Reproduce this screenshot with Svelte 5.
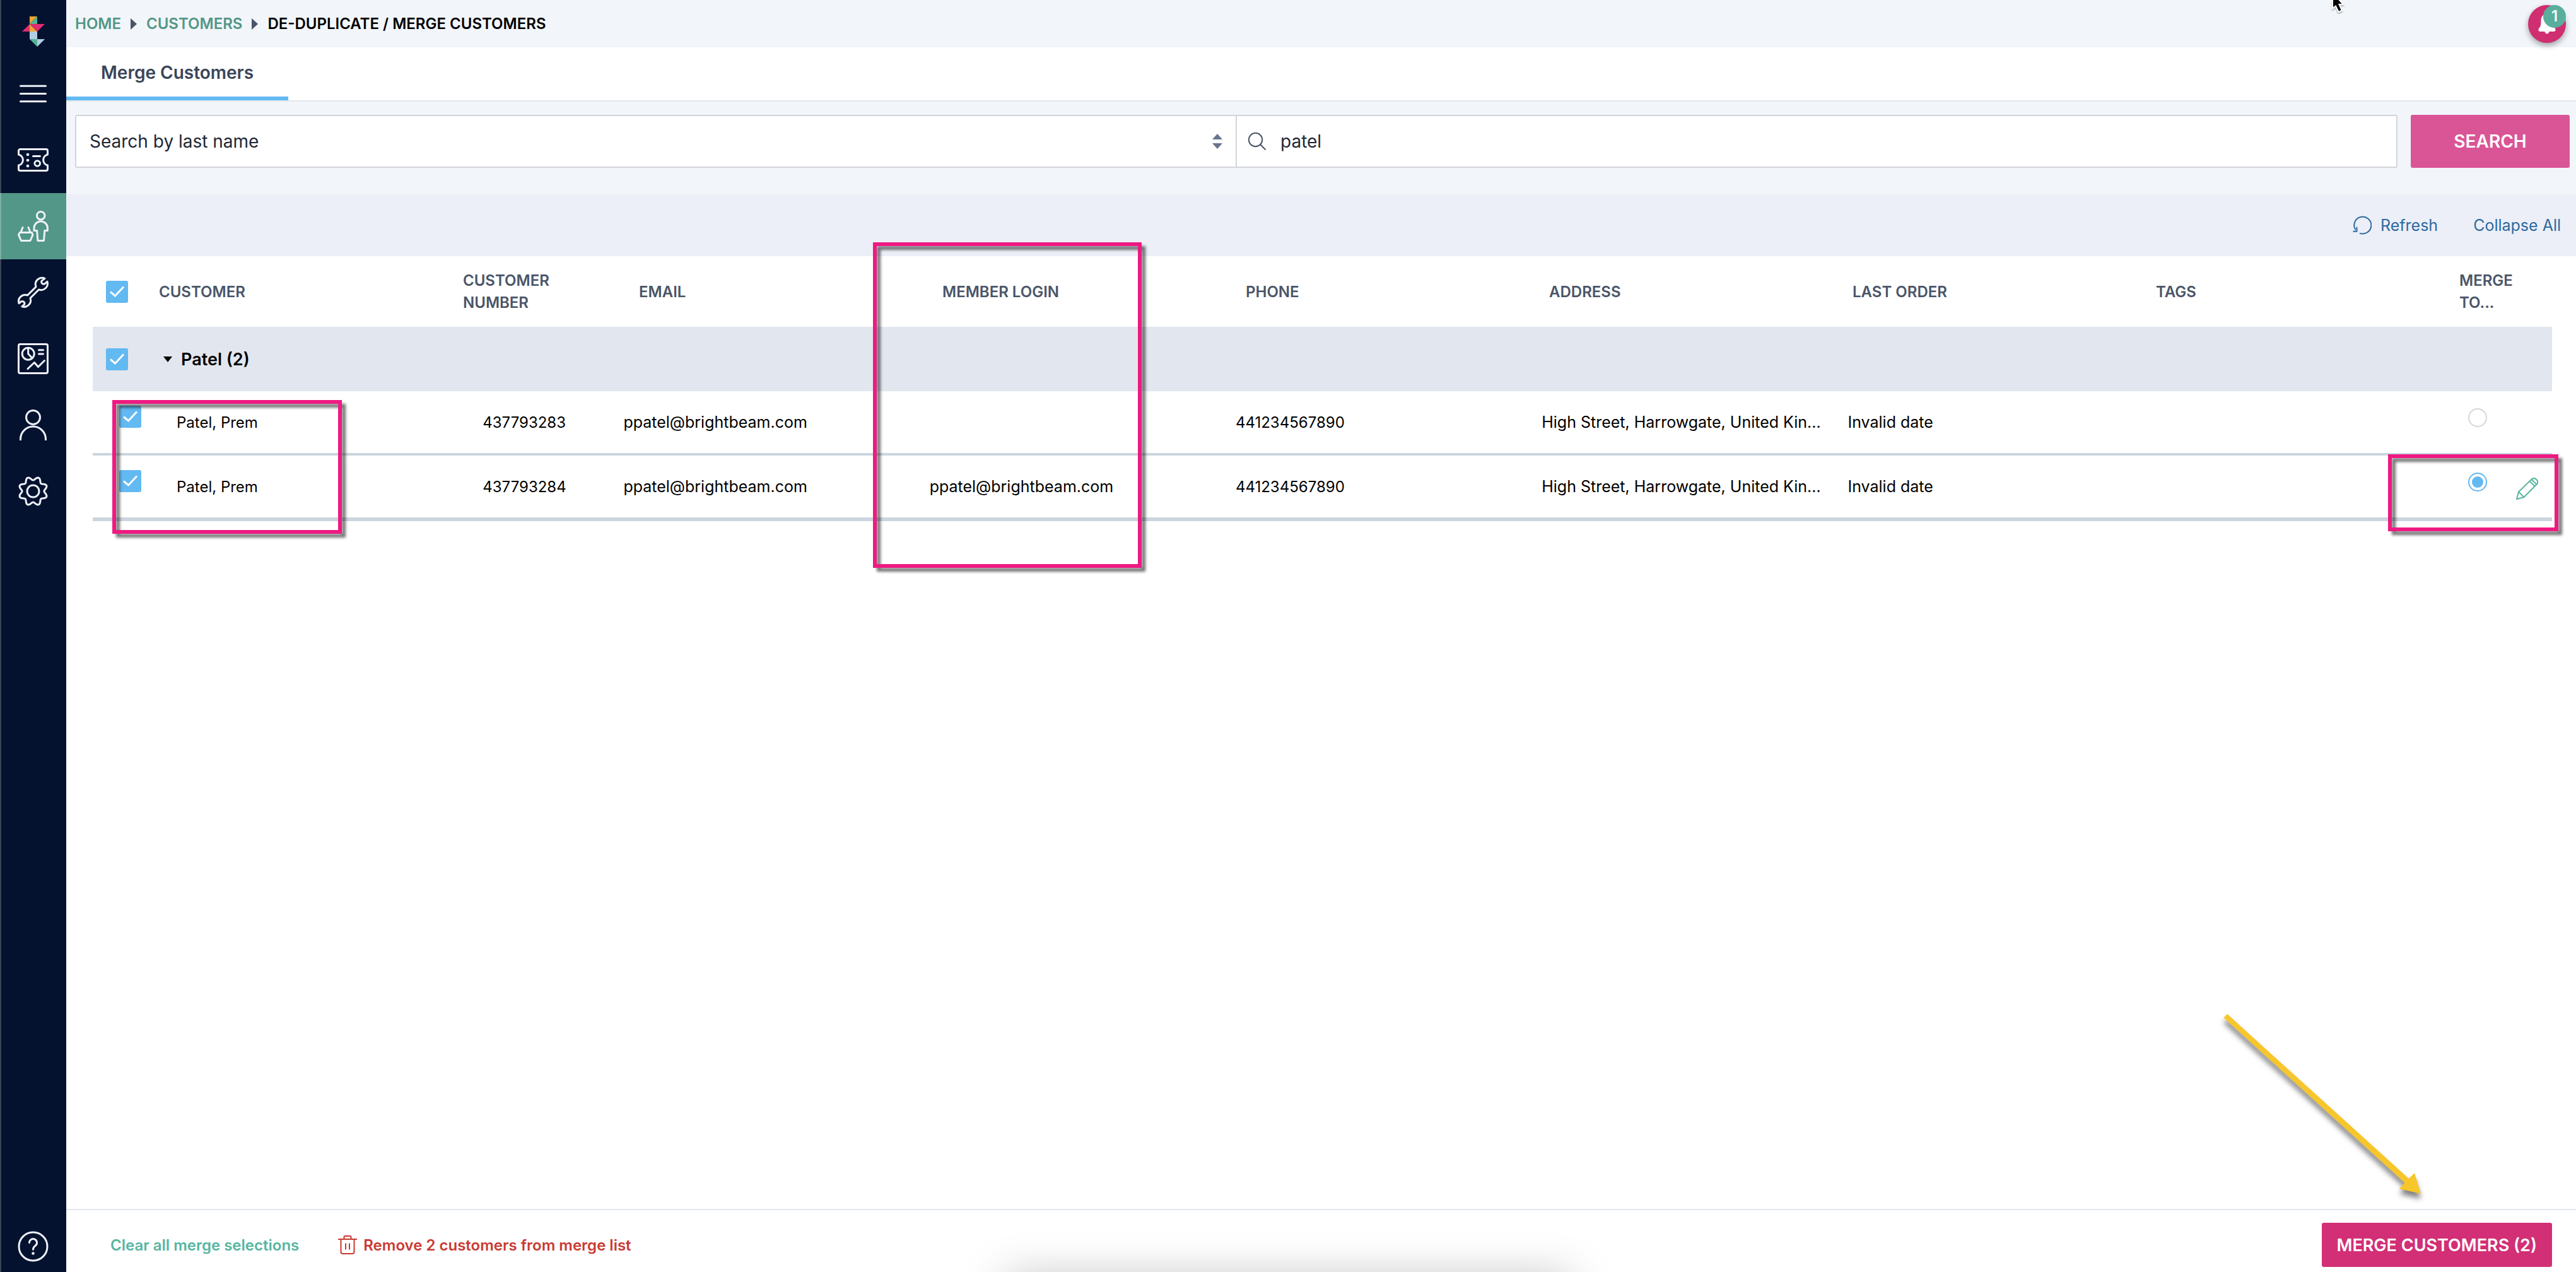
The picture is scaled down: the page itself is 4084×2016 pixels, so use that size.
<script lang="ts">
	type Customer = {
		id: string;
		name: string;
		email: string;
		login: string;
		phone: string;
		address: string;
		lastOrder: string;
		tags: string;
	};

	const headings = ['Email', 'Member login', 'Phone', 'Address', 'Last order', 'Tags'];

	const customers: Customer[] = [
		{
			id: '437793283',
			name: 'Patel, Prem',
			email: 'ppatel@brightbeam.com',
			login: '',
			phone: '441234567890',
			address: 'High Street, Harrowgate, United Kin...',
			lastOrder: 'Invalid date',
			tags: ''
		},
		{
			id: '437793284',
			name: 'Patel, Prem',
			email: 'ppatel@brightbeam.com',
			login: 'ppatel@brightbeam.com',
			phone: '441234567890',
			address: 'High Street, Harrowgate, United Kin...',
			lastOrder: 'Invalid date',
			tags: ''
		}
	];

	let searchBy = $state('last');
	let query = $state('patel');
	let selected = $state(customers.map((c) => c.id));
	let mergeTo = $state('437793284');
	let expanded = $state(true);

	let allSelected = $derived(selected.length === customers.length);

	function toggleAll() {
		selected = allSelected ? [] : customers.map((c) => c.id);
	}

	// Eight-lobed cog outline around the centre of a 49 unit box.
	function cogPath(): string {
		const points: string[] = [];
		for (let deg = 0; deg < 360; deg += 3) {
			const a = (deg * Math.PI) / 180;
			const r = 20.2 - 2.8 * Math.cos(8 * a);
			points.push(`${(24.5 + r * Math.sin(a)).toFixed(2)} ${(24.5 - r * Math.cos(a)).toFixed(2)}`);
		}
		return `M${points.join('L')}Z`;
	}
</script>

{#snippet crumbArrow()}
	<svg class="crumb-arrow" viewBox="0 0 10 18" aria-hidden="true"><path d="M0 0l10 9-10 9z" /></svg>
{/snippet}

<div class="app">
	<nav class="sidebar" aria-label="Main">
		<a class="logo" href="#home" aria-label="Home">
			<svg viewBox="0 0 36 48">
				<path fill="#f0a531" d="M12 0h12L12 12zM12 12l12 12H12z" />
				<path fill="#52b495" d="M24 0v12H12zM12 36h12v12z" />
				<path fill="#df2c72" d="M12 12v12H0zM12 12h24L24 24z" />
				<path fill="#b0cde4" d="M12 24h12v12H12zM24 36h12L24 48z" />
			</svg>
		</a>
		<button class="nav-item" aria-label="Menu">
			<svg viewBox="0 0 49 49"><path d="M4.5 12.3h40M4.5 24.5h40M4.5 36.7h40" /></svg>
		</button>
		<a class="nav-item" href="#tickets" aria-label="Tickets">
			<svg viewBox="0 0 49 49">
				<path
					d="M1.5 10a2.5 2.5 0 0 1 2.5-2.5h41a2.5 2.5 0 0 1 2.5 2.5v6a8.7 8.7 0 0 0 0 17v6a2.5 2.5 0 0 1-2.5 2.5h-41a2.5 2.5 0 0 1-2.5-2.5v-6a8.7 8.7 0 0 0 0-17z"
				/>
				<path d="M24.5 18.5h11" />
				<circle cx="31.2" cy="30" r="4.3" />
				<g class="dots">
					<circle cx="16" cy="16" r="2.3" /><circle cx="16" cy="25" r="2.3" /><circle cx="16" cy="34" r="2.3" />
				</g>
			</svg>
		</a>
		<a class="nav-item active" href="#customers" aria-label="Customers" aria-current="page">
			<svg viewBox="0 0 49 49">
				<circle cx="36.7" cy="7.7" r="6.3" />
				<path d="M26 31.5v-4a10.7 10.7 0 0 1 21.4 0v4h-4.6l-1.3 16h-9.6l-1.3-16z" />
				<path d="M3.5 34.6h19l1.5 3.6-4 9.3h-14.5l-4-9.3zM5 34l3-7.5M20 34l-3-7.5" />
			</svg>
		</a>
		<a class="nav-item" href="#tools" aria-label="Tools">
			<svg viewBox="0 0 49 49">
				<path
					d="M43 2.3A10.4 10.4 0 0 0 29 15.6L15.6 29A10.4 10.4 0 0 0 2 41.8l3.8-3a3.6 3.6 0 0 1 4.7 4.9L6.8 46.8A10.4 10.4 0 0 0 20 33.5L33.5 20A10.4 10.4 0 0 0 47 7.2l-4.2 3.6a3.5 3.5 0 0 1-4.7-4.7z"
				/>
			</svg>
		</a>
		<a class="nav-item" href="#reports" aria-label="Reports">
			<svg viewBox="0 0 49 49">
				<rect x="1.5" y="1.5" width="46" height="46" rx="2.5" />
				<circle cx="16.7" cy="16.7" r="9.5" />
				<path d="M16.7 7.5v9.2l6.3 6.8M33.5 10.8h7M33.5 17h7M16 40.5l10.5-10 6 7 10-10" />
			</svg>
		</a>
		<a class="nav-item" href="#account" aria-label="Account">
			<svg viewBox="0 0 49 49">
				<circle cx="24.5" cy="12.5" r="11" />
				<path class="butt" d="M4.5 49v-2a20 20 0 0 1 40 0v2" />
			</svg>
		</a>
		<a class="nav-item" href="#settings" aria-label="Settings">
			<svg viewBox="0 0 49 49">
				<circle cx="24.5" cy="24.5" r="9.5" />
				<path d={cogPath()} />
			</svg>
		</a>
		<button class="nav-item help" aria-label="Help">
			<svg viewBox="0 0 49 49">
				<circle cx="24.5" cy="24.5" r="22.5" />
				<path d="M18.5 18.5a6 6 0 1 1 9.8 4.7c-2.3 1.9-3.8 2.8-3.8 6" />
				<g class="dots"><circle cx="24.5" cy="35.5" r="2.3" /></g>
			</svg>
		</button>
	</nav>

	<main class="page">
		<header class="topbar">
			<nav class="crumbs" aria-label="Breadcrumb">
				<a href="#home">HOME</a>
				{@render crumbArrow()}
				<a href="#customers">CUSTOMERS</a>
				{@render crumbArrow()}
				<span aria-current="page">DE-DUPLICATE / MERGE CUSTOMERS</span>
			</nav>
			<button class="bell" aria-label="Notifications, 1 unread">
				<svg viewBox="0 0 28 34" aria-hidden="true">
					<path
						d="M14 0c5.5 1 9.5 5 9.5 11.5 0 7 .5 9.5 3 12 1.8 2 1.5 5.5-1.5 5.5h-7.5a3.6 4.5 0 0 1-7 0H3c-3 0-3.3-3.5-1.5-5.5 2.5-2.5 3-5 3-12C4.5 5 8.5 1 14 0z"
					/>
				</svg>
				<span class="badge">1</span>
			</button>
		</header>

		<div class="tabs">
			<a class="tab" href="#merge" aria-current="page">Merge Customers</a>
		</div>

		<form class="search" onsubmit={(e) => e.preventDefault()}>
			<div class="fields">
				<div class="field">
					<select bind:value={searchBy} aria-label="Search by">
						<option value="last">Search by last name</option>
						<option value="email">Search by email</option>
					</select>
					<svg class="sort" viewBox="0 0 16 24" aria-hidden="true">
						<path d="M8 0l8 9H0zM0 15h16l-8 9z" />
					</svg>
				</div>
				<div class="field query">
					<svg class="lens" viewBox="0 0 28 28" aria-hidden="true">
						<circle cx="11.5" cy="11.5" r="10.7" /><path d="M19 19l8.5 8.5" />
					</svg>
					<input type="text" bind:value={query} aria-label="Search text" />
				</div>
			</div>
			<button class="btn btn-search" type="submit">SEARCH</button>
		</form>

		<div class="toolbar">
			<button class="link">
				<svg class="refresh" viewBox="0 0 30 30" aria-hidden="true">
					<path d="M11 27.6A13.5 13.5 0 1 0 4.6 22.5M.5 24.8h6v-7" />
				</svg>
				Refresh
			</button>
			<button class="link" onclick={() => (expanded = !expanded)}>Collapse All</button>
		</div>

		<div class="content">
			<table>
				<thead>
					<tr class="head-row">
						<th><input type="checkbox" checked={allSelected} onchange={toggleAll} aria-label="Select all" /></th>
						<th>Customer</th>
						<th class="narrow">Customer number</th>
						{#each headings as heading}
							<th>{heading}</th>
						{/each}
						<th class="narrow">Merge to...</th>
					</tr>
				</thead>
				<tbody>
					<tr class="group-row">
						<td><input type="checkbox" checked={allSelected} onchange={toggleAll} aria-label="Select Patel group" /></td>
						<td>
							<button class="group-toggle" aria-expanded={expanded} onclick={() => (expanded = !expanded)}>
								<svg viewBox="0 0 14 9" aria-hidden="true"><path d="M0 0h14L7 9z" /></svg>
								Patel (2)
							</button>
						</td>
					</tr>
					{#if expanded}
						{#each customers as customer (customer.id)}
							<tr class="row">
								<td class="pick">
									<input type="checkbox" value={customer.id} bind:group={selected} aria-label="Select {customer.id}" />
								</td>
								<td>{customer.name}</td>
								<td>{customer.id}</td>
								<td class="text">{customer.email}</td>
								<td class="text">{customer.login}</td>
								<td>{customer.phone}</td>
								<td class="text">{customer.address}</td>
								<td class="text">{customer.lastOrder}</td>
								<td>{customer.tags}</td>
								<td class="target">
									<input type="radio" name="merge-to" value={customer.id} bind:group={mergeTo} aria-label="Merge to {customer.id}" />
									{#if mergeTo === customer.id}
										<button class="edit" aria-label="Edit {customer.id}">
											<svg viewBox="0 0 36 36">
												<path
													d="M1 35l3-11.5L25.5 2.8a6 6 0 0 1 8 8L12.5 32zM4 23.5l8.5 8.5M21.5 6.5l8 8M24.5 3.8l8 8"
												/>
											</svg>
										</button>
									{/if}
								</td>
							</tr>
						{/each}
					{/if}
				</tbody>
			</table>
		</div>

		<footer class="actions">
			<button class="clear" onclick={() => (selected = [])}>Clear all merge selections</button>
			<button class="remove">
				<svg viewBox="0 0 30 30" aria-hidden="true">
					<path
						d="M0 6h30M9.5 6V2.5a1.5 1.5 0 0 1 1.5-1.5h8a1.5 1.5 0 0 1 1.5 1.5V6M4.5 6v20a3 3 0 0 0 3 3h15a3 3 0 0 0 3-3V6M12 12.5v10M18 12.5v10"
					/>
				</svg>
				Remove {selected.length} customers from merge list
			</button>
			<button class="btn btn-merge">MERGE CUSTOMERS ({selected.length})</button>
		</footer>
	</main>

	<!-- Callouts drawn over the page -->
	<div class="callout callout-names"></div>
	<div class="callout callout-login"></div>
	<div class="callout callout-target"></div>
	<svg class="arrow" viewBox="0 0 320 290" aria-hidden="true">
		<path d="M11 5L299 266l9-9 10 33-34-8 8.5-9.5L5.5 11z" />
	</svg>
	<svg class="cursor" viewBox="0 0 26 26" aria-hidden="true">
		<path d="M3-12V13.5l5-4 4.5 9.5 5.5-2.5-4.5-9.5H20z" />
	</svg>
	<div class="dock-shadow"></div>
</div>

<style>
	:global(body) {
		background: #fff;
	}

	.app {
		position: relative;
		display: flex;
		min-height: 100vh;
		overflow: hidden;
		font-family: Inter, 'Liberation Sans', sans-serif;
		font-size: 24px;
		color: #000;
	}

	.app :global(*) {
		box-sizing: border-box;
	}

	button {
		padding: 0;
		border: 0;
		background: none;
		font: inherit;
		color: inherit;
		cursor: pointer;
	}

	a {
		color: inherit;
		text-decoration: none;
	}

	svg {
		display: block;
		flex: none;
	}

	/* Sidebar */
	.sidebar {
		display: flex;
		flex-direction: column;
		flex: none;
		width: 105px;
		background: #04122f;
		box-shadow: inset 2px 0 #3b4459;
	}

	.logo {
		display: flex;
		justify-content: center;
		height: 96px;
		padding-top: 26px;
	}

	.logo svg {
		width: 36px;
		height: 48px;
	}

	.nav-item {
		display: flex;
		align-items: center;
		justify-content: center;
		height: 105px;
	}

	.nav-item svg {
		width: 49px;
		height: 49px;
		overflow: visible;
		fill: none;
		stroke: #edf0f9;
		stroke-width: 3;
		stroke-linecap: round;
		stroke-linejoin: round;
	}

	.nav-item .butt {
		stroke-linecap: butt;
	}

	.nav-item .dots {
		fill: #edf0f9;
		stroke: none;
	}

	.nav-item.active {
		background: #529787;
		box-shadow: inset 2px 0 #7bb0a4;
	}

	.nav-item.help {
		height: 82px;
		margin-top: auto;
	}

	/* Page frame */
	.page {
		display: flex;
		flex: 1;
		flex-direction: column;
		min-width: 0;
	}

	.topbar {
		display: flex;
		align-items: center;
		justify-content: space-between;
		height: 75px;
		padding: 0 16px 0 14px;
		background: #f2f5fa;
	}

	.crumbs {
		display: flex;
		align-items: center;
		gap: 15px;
		font-weight: 600;
	}

	.crumbs a {
		color: #529787;
	}

	.crumb-arrow {
		width: 10px;
		height: 18px;
		fill: #4a5568;
	}

	.bell {
		position: relative;
		display: grid;
		place-items: center;
		width: 60px;
		height: 60px;
		border-radius: 50%;
		background: #cf2e70;
		box-shadow: 0 4px 10px rgb(0 0 0 / 0.35);
	}

	.bell svg {
		width: 28px;
		height: 34px;
		fill: #fff;
	}

	.badge {
		position: absolute;
		top: 0;
		right: 0;
		width: 36px;
		height: 36px;
		border-radius: 50%;
		background: #59ae9c;
		font-weight: 600;
		line-height: 36px;
		color: #fff;
	}

	.tabs {
		display: flex;
		height: 86px;
		border-bottom: 2px solid #e3e7ee;
	}

	.tab {
		padding: 0 55px;
		border-bottom: 6px solid #63b9f2;
		font-size: 28px;
		font-weight: 600;
		line-height: 80px;
		color: #3a4558;
	}

	/* Search */
	.search {
		display: flex;
		gap: 21px;
		padding: 21px 10px 42px 14px;
		background: #f2f5fa;
	}

	.fields {
		display: flex;
		flex: 1;
		height: 84px;
		border: 2px solid #d2d6da;
		border-radius: 3px;
		background: #fff;
	}

	.field {
		position: relative;
		display: flex;
		flex: 1;
		align-items: center;
	}

	.field + .field {
		border-left: 2px solid #d2d6da;
	}

	.field select,
	.field input {
		width: 100%;
		height: 100%;
		border: 0;
		outline: 0;
		appearance: none;
		background: none;
		font: inherit;
		font-size: 28px;
		color: #1e2837;
	}

	.field select {
		padding: 0 48px 0 21px;
	}

	.field input {
		padding: 0 21px 0 69px;
	}

	.sort {
		position: absolute;
		right: 21px;
		width: 16px;
		height: 24px;
		fill: #68758c;
		pointer-events: none;
	}

	.lens {
		position: absolute;
		left: 18px;
		width: 28px;
		height: 28px;
		fill: none;
		stroke: #4a5568;
		stroke-width: 2;
	}

	.btn {
		border-radius: 3px;
		font-weight: 600;
		color: #fff;
	}

	.btn-search {
		width: 252px;
		background: #da5596;
		font-size: 28px;
	}

	/* Toolbar */
	.toolbar {
		display: flex;
		align-items: center;
		justify-content: flex-end;
		gap: 56px;
		height: 98px;
		padding: 0 24px;
		background: #eceff7;
	}

	.link {
		display: flex;
		align-items: center;
		gap: 14px;
		font-size: 25px;
		color: #2d6aa0;
	}

	.refresh {
		width: 30px;
		height: 30px;
		fill: none;
		stroke: currentColor;
		stroke-width: 2;
	}

	/* Table: header and body rows each have their own column tracks */
	.content {
		flex: 1;
		padding: 0 38px 0 42px;
	}

	table,
	thead,
	tbody {
		display: block;
	}

	tr {
		display: grid;
		align-items: center;
	}

	th,
	td {
		min-width: 0;
		padding: 0;
		text-align: left;
		white-space: nowrap;
	}

	.head-row,
	.group-row {
		grid-template-columns: 84px 482fr 279fr repeat(6, 481fr) 147px;
		padding-left: 21px;
	}

	.head-row {
		height: 112px;
	}

	th {
		font-weight: 600;
		line-height: 35px;
		text-transform: uppercase;
		color: #4a5568;
	}

	.narrow {
		white-space: normal;
	}

	th.narrow {
		padding-right: 42px;
	}

	.group-row {
		height: 102px;
		background: #e2e6ee;
	}

	.group-toggle {
		display: flex;
		align-items: center;
		gap: 14px;
		padding-left: 7px;
		font-size: 27px;
		font-weight: 600;
	}

	.group-toggle svg {
		width: 14px;
		height: 9px;
	}

	.row {
		grid-template-columns: 91px 485fr 223fr repeat(5, 485fr) 498fr 133px;
		height: 102px;
		padding-left: 42px;
		border-bottom: 4px solid #ccd5df;
	}

	.row:last-child {
		height: 104px;
		border-bottom-width: 6px;
	}

	.row .text {
		font-size: 25px;
	}

	.row .pick,
	.row .target {
		align-self: start;
	}

	.row .pick {
		padding-top: 23px;
	}

	.row .target {
		display: flex;
		gap: 46px;
		padding-top: 27px;
	}

	input[type='checkbox'],
	input[type='radio'] {
		display: block;
		margin: 0;
		appearance: none;
		cursor: pointer;
	}

	input[type='checkbox'] {
		width: 35px;
		height: 35px;
		border: 2px solid #d6d6d6;
		border-radius: 3px;
	}

	input[type='checkbox']:checked {
		border: 0;
		background: #63b9f2
			url("data:image/svg+xml,%3Csvg xmlns='http://www.w3.org/2000/svg' viewBox='0 0 35 35'%3E%3Cpath d='M7 17.5l7.5 6.5L28 9.5' fill='none' stroke='%23fff' stroke-width='3'/%3E%3C/svg%3E");
	}

	input[type='radio'] {
		width: 30px;
		height: 30px;
		border: 2px solid #d6d6d6;
		border-radius: 50%;
	}

	input[type='radio']:checked {
		border-color: #63b9f2;
		background: #63b9f2 content-box;
		padding: 4px;
	}

	.edit {
		padding-top: 7px;
		color: #57b5a0;
	}

	.edit svg {
		width: 36px;
		height: 36px;
		fill: none;
		stroke: currentColor;
		stroke-width: 2;
		stroke-linejoin: round;
	}

	/* Bottom action bar */
	.actions {
		display: flex;
		align-items: center;
		height: 100px;
		padding: 12px 38px 0 70px;
		border-top: 2px solid #e2e7ee;
	}

	.clear {
		font-weight: 600;
		color: #57b5a0;
	}

	.remove {
		display: flex;
		align-items: center;
		gap: 10px;
		margin-left: 62px;
		font-weight: 600;
		color: #c93a32;
	}

	.remove svg {
		width: 30px;
		height: 30px;
		fill: none;
		stroke: currentColor;
		stroke-width: 2;
	}

	.btn-merge {
		height: 70px;
		margin-left: auto;
		padding: 0 24px;
		background: #d22f76;
		font-size: 27px;
	}

	/* Callouts */
	.callout {
		position: absolute;
		border: 6px solid #ee1a82;
		filter: drop-shadow(6px 6px 2px rgb(0 0 0 / 0.55));
		pointer-events: none;
	}

	.callout-names {
		top: 634px;
		left: 178px;
		width: 364px;
		height: 212px;
	}

	.callout-login {
		top: 384px;
		left: 1384px;
		width: 426px;
		height: 516px;
	}

	.callout-target {
		top: 720px;
		right: 28px;
		width: 270px;
		height: 122px;
	}

	.arrow {
		position: absolute;
		right: 244px;
		bottom: 124px;
		width: 320px;
		height: 290px;
		overflow: visible;
		fill: #f7c62b;
		filter: drop-shadow(0 8px 4px rgb(0 0 0 / 0.5));
		pointer-events: none;
	}

	.cursor {
		position: absolute;
		top: 0;
		right: 363px;
		width: 26px;
		height: 26px;
		fill: #000;
		stroke: #fff;
		stroke-width: 2;
		filter: drop-shadow(0 2px 1px rgb(0 0 0 / 0.3));
		pointer-events: none;
	}

	.dock-shadow {
		position: absolute;
		bottom: -60px;
		left: 39%;
		width: 22%;
		height: 50px;
		box-shadow: 0 0 70px rgb(0 0 0 / 0.28);
		pointer-events: none;
	}
</style>
